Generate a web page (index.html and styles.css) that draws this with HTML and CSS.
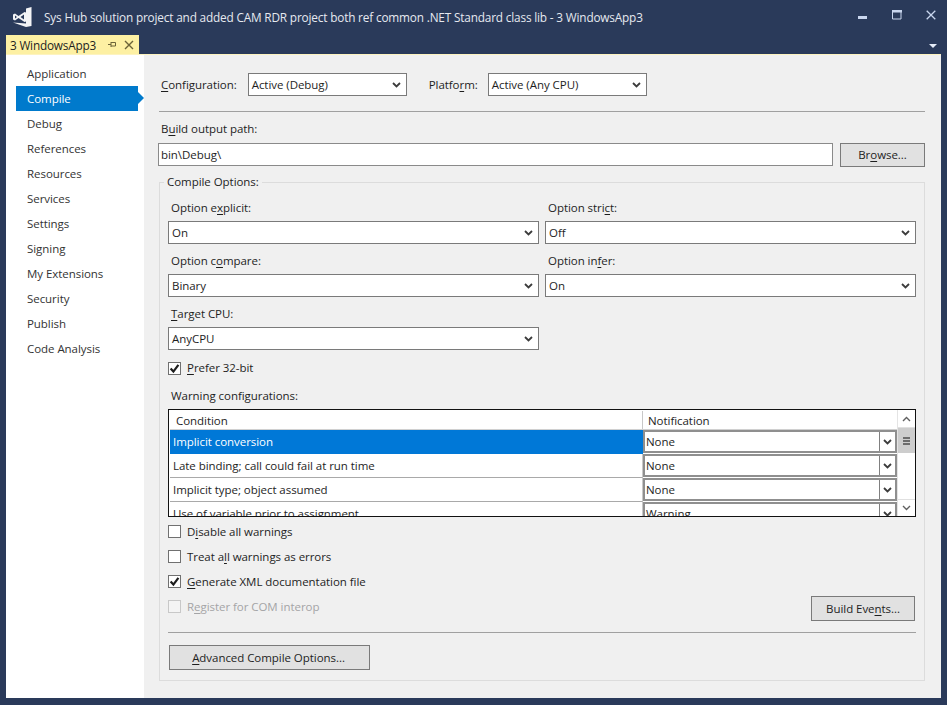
FILE: index.html
```html
<!DOCTYPE html>
<html lang="en">
<head>
<meta charset="utf-8">
<title>3 WindowsApp3</title>
<link rel="stylesheet" href="styles.css">
</head>
<body>
<svg class="defs" width="0" height="0" aria-hidden="true">
  <symbol id="chev" viewBox="0 0 9 6"><path d="M1 1l3.5 3.5L8 1" fill="none" stroke="#3c3c3c" stroke-width="1.8"/></symbol>
  <symbol id="tick" viewBox="0 0 13 13"><path d="M2.6 6.6l2.8 3L10.4 2.8" fill="none" stroke="#1e1e1e" stroke-width="2.2"/></symbol>
</svg>
<div class="window">
  <header class="titlebar">
    <svg class="logo" width="20" height="20" viewBox="0 0 20 20"><path d="M14 1.5L19.5 0v19L14 20 1 15.5l13 1z" fill="#f4f4f6"/><path fill-rule="evenodd" d="M1 7.5l2-1 3.5 2.5 6-4 1.5.5v9l-1.5.5-6-4L3 13.5l-2-1zM3 8.5v3L5 10zM12 7.5L8.5 10l3.5 2.5z" fill="#f4f4f6"/></svg>
    <div class="title">Sys Hub solution project and added CAM RDR project both ref common .NET Standard class lib - 3 WindowsApp3</div>
    <div class="winbtns">
      <svg width="10" height="10" viewBox="0 0 10 10"><rect x="0" y="6" width="9" height="3" fill="#c9d6ee"/></svg>
      <svg width="10" height="10" viewBox="0 0 10 10"><path d="M.5 .5h8.5v8.5H.5z" fill="none" stroke="#c9d6ee"/><rect y="0" width="10" height="2.5" fill="#c9d6ee"/></svg>
      <svg width="10" height="10" viewBox="0 0 10 10"><path d="M.7 .7l8.6 8.6M9.3 .7L.7 9.3" fill="none" stroke="#c9d6ee" stroke-width="1.3"/></svg>
    </div>
  </header>
  <div class="tabstrip">
    <div class="tab">
      <span class="tabname">3 WindowsApp3</span>
      <svg width="9" height="9" viewBox="0 0 9 9"><path d="M0 4.5h3M3 2v5M3 2.5h4.5v3.5H3" fill="none" stroke="#6b6338"/></svg>
      <svg width="10" height="10" viewBox="0 0 10 10"><path d="M1 1l8 8M9 1L1 9" fill="none" stroke="#6b6338" stroke-width="1.4"/></svg>
    </div>
    <div class="overflow"></div>
  </div>
  <div class="body">
    <nav class="nav">
      <div class="navitem">Application</div>
      <div class="navitem active">Compile</div>
      <div class="navitem">Debug</div>
      <div class="navitem">References</div>
      <div class="navitem">Resources</div>
      <div class="navitem">Services</div>
      <div class="navitem">Settings</div>
      <div class="navitem">Signing</div>
      <div class="navitem">My Extensions</div>
      <div class="navitem">Security</div>
      <div class="navitem">Publish</div>
      <div class="navitem">Code Analysis</div>
    </nav>
    <main class="main">
      <div class="configrow">
        <label class="cfglabel"><u>C</u>onfiguration:</label>
        <div class="combo w-config"><span>Active (Debug)</span><svg class="chev"><use href="#chev"/></svg></div>
        <label class="cfglabel pf">Platfo<u>r</u>m:</label>
        <div class="combo w-platform"><span>Active (Any CPU)</span><svg class="chev"><use href="#chev"/></svg></div>
      </div>
      <div class="rule"></div>
      <div class="lbl pathlabel">B<u>u</u>ild output path:</div>
      <div class="pathrow">
        <div class="input">bin\Debug\</div>
        <button class="btn browse">Br<u>o</u>wse...</button>
      </div>
      <fieldset class="group">
        <legend>Compile Options:</legend>
        <div class="optgrid">
          <div class="opt"><div class="lbl">Option e<u>x</u>plicit:</div><div class="combo"><span>On</span><svg class="chev"><use href="#chev"/></svg></div></div>
          <div class="opt"><div class="lbl">Option stri<u>c</u>t:</div><div class="combo"><span>Off</span><svg class="chev"><use href="#chev"/></svg></div></div>
          <div class="opt"><div class="lbl">Option c<u>o</u>mpare:</div><div class="combo"><span>Binary</span><svg class="chev"><use href="#chev"/></svg></div></div>
          <div class="opt"><div class="lbl">Option in<u>f</u>er:</div><div class="combo"><span>On</span><svg class="chev"><use href="#chev"/></svg></div></div>
          <div class="opt"><div class="lbl"><u>T</u>arget CPU:</div><div class="combo"><span>AnyCPU</span><svg class="chev"><use href="#chev"/></svg></div></div>
        </div>
        <div class="check prefer"><span class="box"><svg width="13" height="13"><use href="#tick"/></svg></span><span><u>P</u>refer 32-bit</span></div>
        <div class="lbl warnlabel">Warning configurations:</div>
        <div class="table">
          <div class="grid">
            <div class="row head"><div class="c1">Condition</div><div class="c2">Notification</div></div>
            <div class="row sel"><div class="c1">Implicit conversion</div><div class="cellcombo"><span>None</span><i><svg class="chev"><use href="#chev"/></svg></i></div></div>
            <div class="row"><div class="c1">Late binding; call could fail at run time</div><div class="cellcombo"><span>None</span><i><svg class="chev"><use href="#chev"/></svg></i></div></div>
            <div class="row"><div class="c1">Implicit type; object assumed</div><div class="cellcombo"><span>None</span><i><svg class="chev"><use href="#chev"/></svg></i></div></div>
            <div class="row"><div class="c1">Use of variable prior to assignment</div><div class="cellcombo"><span>Warning</span><i><svg class="chev"><use href="#chev"/></svg></i></div></div>
          </div>
          <div class="scroll">
            <div class="sbtn"><svg width="9" height="6" viewBox="0 0 9 6"><path d="M1 5l3.5-3.5L8 5" fill="none" stroke="#606060" stroke-width="1.4"/></svg></div>
            <div class="thumb"><b></b><b></b><b></b></div>
            <div class="strack"></div>
            <div class="sbtn"><svg width="9" height="6" viewBox="0 0 9 6"><path d="M1 1l3.5 3.5L8 1" fill="none" stroke="#606060" stroke-width="1.4"/></svg></div>
          </div>
        </div>
        <div class="lower">
          <div class="checks">
            <div class="check"><span class="box"></span><span>D<u>i</u>sable all warnings</span></div>
            <div class="check"><span class="box"></span><span>Treat a<u>l</u>l warnings as errors</span></div>
            <div class="check"><span class="box"><svg width="13" height="13"><use href="#tick"/></svg></span><span><u>G</u>enerate XML documentation file</span></div>
            <div class="check off"><span class="box"></span><span>R<u>e</u>gister for COM interop</span></div>
          </div>
          <button class="btn events">Build Eve<u>n</u>ts...</button>
        </div>
        <div class="rule inner"></div>
        <button class="btn advanced"><u>A</u>dvanced Compile Options...</button>
      </fieldset>
    </main>
  </div>
</div>
</body>
</html>
```
FILE: styles.css
```css
* { box-sizing: border-box; }
html, body { margin: 0; height: 100%; }
body {
  background: #2a3a5a;
  font-family: "Open Sans", "Noto Sans", sans-serif;
  font-size: 11.5px;
  letter-spacing: -0.05px;
  line-height: 16px;
  color: #1e1e1e;
  overflow: hidden;
}
u { text-underline-offset: 2px; text-decoration-thickness: 1px; }
.defs { position: absolute; }
.window { height: 705px; display: flex; flex-direction: column; padding: 0 6px 7px; }

.titlebar { height: 35px; display: flex; align-items: center; margin-right: -6px; padding-left: 6px; flex: none; }
.logo { flex: none; margin-right: 12px; margin-top: -2px; }
.title { flex: 1; color: #e6e9f0; font-size: 11.8px; letter-spacing: -0.17px; white-space: nowrap; margin-top: -1px; }
.winbtns { display: flex; gap: 24px; padding-right: 11px; margin-top: -5px; }

.tabstrip { height: 19px; display: flex; justify-content: space-between; flex: none; }
.tab {
  width: 133px; background: #fdf0a3; color: #1e1e1e;
  display: flex; align-items: center; padding: 0 5px 0 4px; font-size: 11.8px; letter-spacing: -0.2px;
}
.tabname { flex: 1; white-space: nowrap; }
.tab svg { margin-left: 7px; flex: none; }
.overflow {
  width: 0; height: 0; margin: 9px 4px 0 0;
  border-left: 4px solid transparent; border-right: 4px solid transparent; border-top: 4px solid #e6ecf8;
}

.body { flex: 1; display: flex; background: #f0f0f0; border-top: 1px solid #fdf3c0; min-height: 0; }
.nav { width: 138px; flex: none; background: #fff; padding: 6px 0 0 10px; }
.navitem { height: 25px; padding-left: 11px; line-height: 25px; width: 122px; position: relative; color: #333; }
.navitem.active { background: #007acc; color: #fff; }
.navitem.active::after {
  content: ""; position: absolute; left: 100%; top: 6px;
  border-left: 6px solid #007acc; border-top: 6px solid transparent; border-bottom: 6px solid transparent;
}

.main { flex: 1; min-width: 0; padding: 18px 16px 0 15px; }
.configrow { display: flex; align-items: center; height: 23px; padding-left: 2px; }
.cfglabel { margin-right: 11px; }
.cfglabel.pf { margin-left: 22px; margin-right: 10px; }
.w-config { width: 159px; }
.w-platform { width: 159px; }
.rule { height: 1px; background: #a0a0a0; margin-top: 15px; }
.lbl { height: 16px; }
.pathlabel { margin-top: 9px; padding-left: 2px; }
.pathrow { display: flex; margin-top: 6px; margin-left: -1px; height: 24px; gap: 7px; }
.input { flex: 1; height: 23px; background: #fff; border: 1px solid #8a8a8a; padding-left: 2px; line-height: 21px; }

.btn {
  font: inherit; letter-spacing: inherit; color: #1e1e1e; background: #e1e1e1; border: 1px solid #7a7a7a;
  padding: 0; display: block;
}
.browse { width: 85px; height: 24px; }
.events { width: 104px; height: 25px; margin-right: 1px; }
.advanced { width: 201px; height: 25px; margin: 12px 0 0 1px; padding-right: 2px; }

.group { margin: 7px 0 0; padding: 10px 8px 10px; border: 1px solid #dcdcdc; min-width: 0; }
.group legend { padding: 0 3px; margin-left: -4px; height: 16px; }

.optgrid { display: grid; grid-template-columns: 371px 371px; column-gap: 6px; row-gap: 9px; }
.opt .lbl { padding-left: 3px; margin-bottom: 5px; }
.combo {
  height: 23px; background: #fff; border: 1px solid #7a7a7a; display: flex; align-items: center;
  justify-content: space-between; padding: 0 5px 0 3px;
}
.chev { width: 9px; height: 6px; flex: none; }

.check { height: 25px; display: flex; align-items: center; }
.check > span:last-child { margin-left: 6px; }
.box { width: 13px; height: 13px; background: #fff; border: 1px solid #707070; display: block; flex: none; position: relative; }
.box svg { position: absolute; left: -1px; top: -1px; }
.check.off { color: #a4a4a6; }
.check.off .box { border-color: #c8c8c8; background: #f4f4f4; }
.prefer { height: 16px; margin-top: 10px; }
.warnlabel { margin-top: 12px; padding-left: 3px; }

.table { margin-top: 5px; height: 108px; border: 1px solid #111; display: flex; overflow: hidden; background: #fff; }
.grid { flex: 1; min-width: 0; padding: 1px 0 0 1px; }
.row { display: flex; height: 24px; }
.c1 { width: 473px; flex: none; padding-left: 3px; line-height: 23px; border-bottom: 1px solid #a9a9a9; border-right: 1px solid #c8c8c8; white-space: nowrap; }
.row.head { height: 19px; border-bottom: 1px solid #d0d0d0; }
.head .c1 { padding-left: 6px; line-height: 19px; border-bottom: 0; }
.head .c2 { padding-left: 5px; line-height: 19px; border-left: 0; }
.row.sel .c1 { background: #0078d7; color: #fff; border: 0; }
.cellcombo { flex: 1; height: 23px; border: 2px solid #8f8f8f; display: flex; background: #fff; }
.cellcombo span { flex: 1; padding-left: 1px; line-height: 20px; }
.cellcombo i { width: 16px; border-left: 1px solid #808080; display: flex; align-items: center; justify-content: center; }

.scroll { width: 18px; flex: none; padding-top: 1px; display: flex; flex-direction: column; border-left: 1px solid #e4e4e4; }
.sbtn { height: 17px; display: flex; align-items: center; justify-content: center; border-bottom: 1px solid #e0e0e0; flex: none; }
.sbtn:last-child { border-bottom: 0; border-top: 1px solid #e0e0e0; }
.thumb { height: 25px; background: #cdcdcd; display: flex; flex-direction: column; align-items: center; justify-content: center; gap: 1px; flex: none; }
.thumb b { width: 7px; height: 2px; background: #6c6c6c; display: block; }
.strack { flex: 1; }

.lower { margin-top: 2px; display: flex; justify-content: space-between; align-items: flex-end; }
.checks { padding-bottom: 2px; }
.rule.inner { margin-top: 11px; }
```
